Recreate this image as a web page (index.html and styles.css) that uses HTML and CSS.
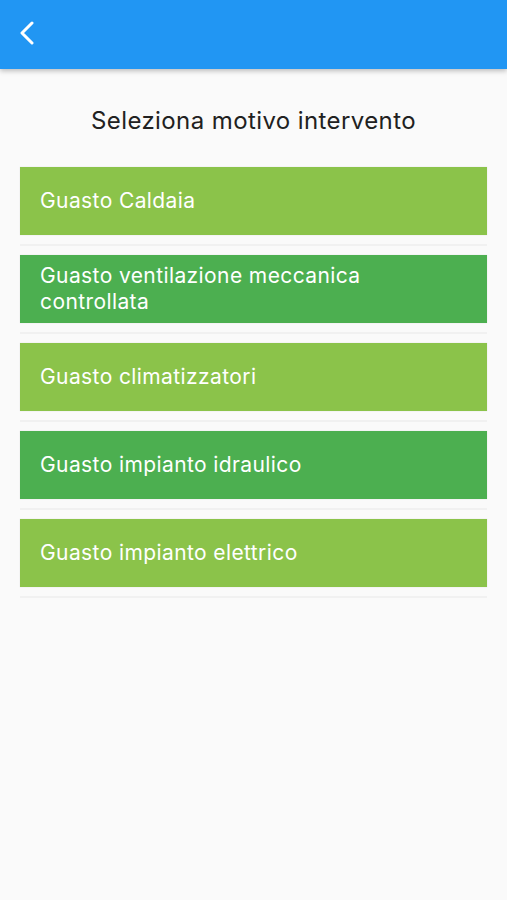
FILE: index.html
```html
<!DOCTYPE html>
<html lang="it">
<head>
    <meta charset="UTF-8">
    <meta name="viewport" content="width=device-width, initial-scale=1.0">
    <title>Seleziona motivo intervento</title>
    <link rel="stylesheet" href="styles.css">
</head>
<body>
    <header class="app-bar">
        <button class="back-btn" aria-label="Indietro">
            <svg width="16" height="24" viewBox="0 0 16 24">
                <path d="M13 2 L3 12 L13 22" fill="none" stroke="#fff" stroke-width="3" stroke-linecap="round" stroke-linejoin="round"/>
            </svg>
        </button>
    </header>

    <main class="content">
        <h1 class="title">Seleziona motivo intervento</h1>
        <ul class="reasons">
            <li class="reason light">Guasto Caldaia</li>
            <li class="reason dark">Guasto ventilazione meccanica controllata</li>
            <li class="reason light">Guasto climatizzatori</li>
            <li class="reason dark">Guasto impianto idraulico</li>
            <li class="reason light">Guasto impianto elettrico</li>
        </ul>
    </main>
</body>
</html>
```

FILE: styles.css
```css
body {
    margin: 0;
    padding: 0;
    background-color: #fafafa;
    font-family: Inter, Roboto, "Liberation Sans", Arial, sans-serif;
    color: #212121;
}

.app-bar {
    height: 69px;
    background-color: #2196f3;
    display: flex;
    align-items: center;
    box-shadow: 0 2px 5px rgba(0, 0, 0, 0.25);
}

.back-btn {
    background: none;
    border: none;
    padding: 0;
    margin-left: 19px;
    margin-top: -4px;
    width: 18px;
    height: 26px;
    display: flex;
    align-items: center;
    cursor: pointer;
}

.content {
    padding: 0 20px;
}

.title {
    margin: 37px 0 31px;
    text-align: center;
    font-size: 24px;
    font-weight: 400;
    line-height: 30px;
    letter-spacing: 0.4px;
}

.reasons {
    list-style: none;
    margin: 0;
    padding: 0;
}

.reason {
    height: 68px;
    box-sizing: border-box;
    padding: 0 20px;
    display: flex;
    align-items: center;
    color: #fff;
    font-size: 21px;
    line-height: 26px;
    letter-spacing: 0.4px;
    margin-bottom: 20px;
    position: relative;
    box-shadow: 0 0 1px rgba(0, 0, 0, 0.15);
}

.reason::after {
    content: "";
    position: absolute;
    left: 0;
    right: 0;
    bottom: -11px;
    height: 2px;
    background-color: #f1f1f1;
}

.reason.light {
    background-color: #8bc34a;
}

.reason.dark {
    background-color: #4caf50;
}

.reason.dark:nth-child(2) {
    padding-right: 100px;
}
```
